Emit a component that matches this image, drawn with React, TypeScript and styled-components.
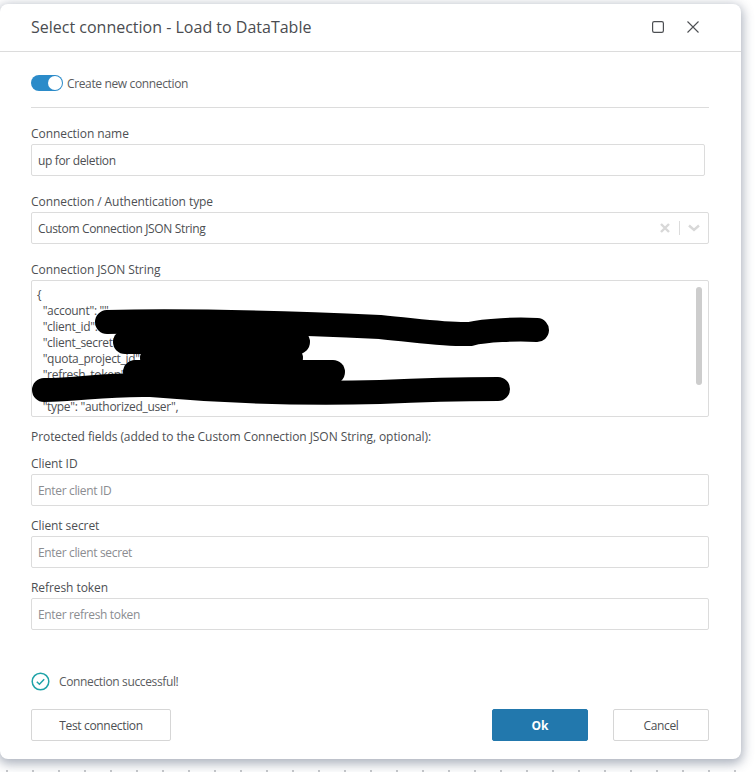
import { createGlobalStyle, styled } from 'styled-components';

const GlobalStyle = createGlobalStyle`
    html, body {
        margin: 0;
        padding: 0;
        height: 772px;
        overflow: hidden;
        background-color: #ffffff;
        background-image: radial-gradient(circle at center, #b4b6ba 0, #b4b6ba 0.6px, transparent 1px);
        background-size: 26px 26px;
        background-position: -6px 4px;
        font-family: 'Open Sans', 'Liberation Sans', sans-serif;
        color: #4d4f53;
    }
`;

const Dialog = styled.div`
    box-sizing: border-box;
    width: 741px;
    height: 755px;
    margin-top: 4px;
    background: #fff;
    border-radius: 8px;
    box-shadow: 0 3px 11px 2px rgba(60, 75, 100, 0.42);
    display: flex;
    flex-direction: column;
`;

const Header = styled.div`
    box-sizing: border-box;
    height: 48px;
    flex: none;
    padding: 0 42px 1px 31px;
    border-bottom: 1px solid #dcdcdc;
    display: flex;
    align-items: center;
    justify-content: space-between;
`;

const Title = styled.div`
    font-size: 16px;
    font-weight: 500;
    color: #4a4c50;
`;

const HeaderIcons = styled.div`
    display: flex;
    align-items: center;
    gap: 23px;
    color: #4d4f53;
`;

const Body = styled.div`
    flex: 1;
    padding: 23px 32px 18px 31px;
    display: flex;
    flex-direction: column;
`;

const ToggleRow = styled.div`
    display: flex;
    align-items: center;
    gap: 4px;
    height: 16px;
    font-size: 12px;
    letter-spacing: -0.36px;
    color: #5a5c60;
    padding-bottom: 16px;
    border-bottom: 1px solid #dcdcdc;
`;

const Toggle = styled.div`
    width: 32px;
    height: 16px;
    border-radius: 8px;
    background: #2b8bc9;
    display: flex;
    align-items: center;
    justify-content: flex-end;
    padding-right: 1px;
    box-sizing: border-box;
`;

const Knob = styled.div`
    width: 14px;
    height: 14px;
    border-radius: 50%;
    background: #fff;
`;

const Field = styled.div<{ $top: number }>`
    margin-top: ${p => p.$top}px;
    display: flex;
    flex-direction: column;
`;

const Label = styled.label`
    font-size: 12px;
    line-height: 16px;
    font-weight: 500;
    letter-spacing: -0.07px;
    color: #4d4f53;
    margin-bottom: 2px;
`;

const Input = styled.div<{ $short?: boolean; $placeholder?: boolean }>`
    box-sizing: border-box;
    height: 32px;
    width: ${p => (p.$short ? '674px' : '678px')};
    padding: 0 6px;
    border: 1px solid #dcdcdc;
    border-radius: 2px;
    display: flex;
    align-items: center;
    font-size: 12px;
    letter-spacing: -0.34px;
    color: ${p => (p.$placeholder ? '#8b8d91' : '#4d4f53')};
`;

const SelectIcons = styled.div`
    margin-left: auto;
    margin-right: 2px;
    display: flex;
    align-items: center;
    color: #d8d8d8;
`;

const Separator = styled.div`
    width: 1px;
    height: 14px;
    background: #dcdcdc;
    margin: 0 8px 0 9px;
`;

const JsonBox = styled.div`
    box-sizing: border-box;
    position: relative;
    width: 678px;
    height: 137px;
    padding: 6px 5px;
    border: 1px solid #dcdcdc;
    border-radius: 2px;
    overflow: hidden;
    font-size: 12px;
    line-height: 16px;
    letter-spacing: -0.3px;
    white-space: pre;
    color: #4d4f53;
`;

const ScrollThumb = styled.div`
    position: absolute;
    top: 6px;
    right: 6px;
    width: 6px;
    height: 98px;
    border-radius: 3px;
    background: #cdcdcd;
`;

const Scribble = styled.svg`
    position: absolute;
    left: -1px;
    top: -1px;
`;

const Note = styled.div`
    margin-top: 12px;
    font-size: 12px;
    line-height: 16px;
    font-weight: 500;
    letter-spacing: -0.07px;
    color: #4d4f53;
`;

const Status = styled.div`
    margin-top: auto;
    display: flex;
    align-items: center;
    gap: 9px;
    font-size: 12px;
    letter-spacing: -0.36px;
    color: #5a5c60;
`;

const Footer = styled.div`
    margin-top: 18px;
    display: flex;
    align-items: center;
    width: 678px;
`;

const Button = styled.button<{ $width: number; $primary?: boolean }>`
    box-sizing: border-box;
    width: ${p => p.$width}px;
    height: 32px;
    border-radius: 2px;
    border: 1px solid ${p => (p.$primary ? '#2278ad' : '#d6d6d6')};
    background: ${p => (p.$primary ? '#2278ad' : '#fff')};
    color: ${p => (p.$primary ? '#fff' : '#4d4f53')};
    font-family: inherit;
    font-size: 12px;
    letter-spacing: ${p => (p.$primary ? '0' : '-0.33px')};
    font-weight: ${p => (p.$primary ? 700 : 500)};
`;

const RightButtons = styled.div`
    margin-left: auto;
    display: flex;
    gap: 25px;
`;

const App = () => {
    return (
        <>
            <GlobalStyle />
            <Dialog>
                <Header>
                    <Title>Select connection - Load to DataTable</Title>
                    <HeaderIcons>
                        <svg width="12" height="12" viewBox="0 0 12 12" fill="none">
                            <rect x="0.6" y="0.6" width="10.8" height="10.8" rx="1.6" stroke="currentColor" strokeWidth="1.2" />
                        </svg>
                        <svg width="12" height="12" viewBox="0 0 12 12" fill="none">
                            <path d="M0.5 0.5 L11.5 11.5 M11.5 0.5 L0.5 11.5" stroke="currentColor" strokeWidth="1.1" />
                        </svg>
                    </HeaderIcons>
                </Header>
                <Body>
                    <ToggleRow>
                        <Toggle>
                            <Knob />
                        </Toggle>
                        Create new connection
                    </ToggleRow>
                    <Field $top={18}>
                        <Label>Connection name</Label>
                        <Input $short>up for deletion</Input>
                    </Field>
                    <Field $top={18}>
                        <Label>Connection / Authentication type</Label>
                        <Input>
                            Custom Connection JSON String
                            <SelectIcons>
                                <svg width="10" height="10" viewBox="0 0 10 10" fill="none">
                                    <path d="M1 1 L9 9 M9 1 L1 9" stroke="currentColor" strokeWidth="2.4" />
                                </svg>
                                <Separator />
                                <svg width="12" height="8" viewBox="0 0 12 8" fill="none">
                                    <path d="M1 1.5 L6 6 L11 1.5" stroke="currentColor" strokeWidth="2.4" />
                                </svg>
                            </SelectIcons>
                        </Input>
                    </Field>
                    <Field $top={18}>
                        <Label>Connection JSON String</Label>
                        <JsonBox>
                            {`{\n  "account": "",\n  "client_id": "",\n  "client_secret": "",\n  "quota_project_id": "",\n  "refresh_token": "",\n\n  "type": "authorized_user",`}
                            <ScrollThumb />
                            <Scribble width="678" height="137" viewBox="0 0 678 137">
                                <path
                                    d="M76 42 C160 40 260 43 349 47 C400 52 420 55 439 54 C455 50 485 49 506 50"
                                    fill="none"
                                    stroke="#000"
                                    strokeWidth="24"
                                    strokeLinecap="round"
                                />
                                <path d="M94 62 L267 62" fill="none" stroke="#000" strokeWidth="24" strokeLinecap="round" />
                                <path d="M121 78 L260 78" fill="none" stroke="#000" strokeWidth="24" strokeLinecap="round" />
                                <path d="M104 92 L302 92" fill="none" stroke="#000" strokeWidth="24" strokeLinecap="round" />
                                <path
                                    d="M13 110 C50 110 70 104 120 105 C200 112 280 114 349 112 C390 110 430 109 467 109"
                                    fill="none"
                                    stroke="#000"
                                    strokeWidth="24"
                                    strokeLinecap="round"
                                />
                            </Scribble>
                        </JsonBox>
                    </Field>
                    <Note>Protected fields (added to the Custom Connection JSON String, optional):</Note>
                    <Field $top={11}>
                        <Label>Client ID</Label>
                        <Input $placeholder>Enter client ID</Input>
                    </Field>
                    <Field $top={12}>
                        <Label>Client secret</Label>
                        <Input $placeholder>Enter client secret</Input>
                    </Field>
                    <Field $top={12}>
                        <Label>Refresh token</Label>
                        <Input $placeholder>Enter refresh token</Input>
                    </Field>
                    <Status>
                        <svg width="19" height="19" viewBox="0 0 19 19" fill="none">
                            <circle cx="9.5" cy="9.5" r="8.3" stroke="#1fa3a8" strokeWidth="1.5" />
                            <path d="M5.8 9.8 L8.4 12.2 L13.2 7.2" stroke="#1fa3a8" strokeWidth="1.5" />
                        </svg>
                        Connection successful!
                    </Status>
                    <Footer>
                        <Button $width={140}>Test connection</Button>
                        <RightButtons>
                            <Button $width={96} $primary>
                                Ok
                            </Button>
                            <Button $width={96}>Cancel</Button>
                        </RightButtons>
                    </Footer>
                </Body>
            </Dialog>
        </>
    );
};

export default App;
